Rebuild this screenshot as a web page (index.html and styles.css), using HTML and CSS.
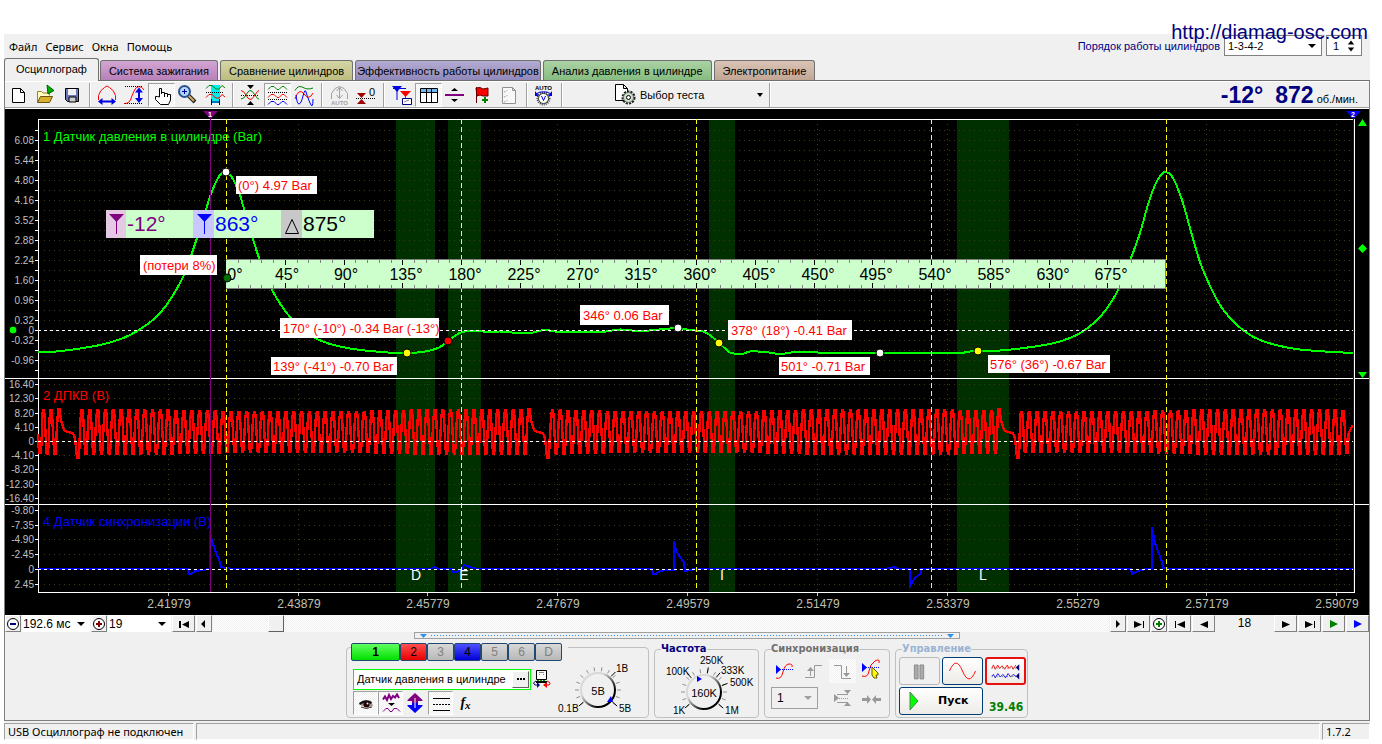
FILE: index.html
```html
<!DOCTYPE html>
<html lang="ru">
<head>
<meta charset="utf-8">
<title>USB Осциллограф</title>
<link rel="stylesheet" href="styles.css">
</head>
<body>
<main class="window">
  <a class="site-link" href="#">http://diamag-osc.com</a>

  <header class="top">
    <nav class="menu">
      <button type="button">Файл</button>
      <button type="button">Сервис</button>
      <button type="button">Окна</button>
      <button type="button">Помощь</button>
    </nav>
    <div class="order">
      <label for="order">Порядок работы цилиндров</label>
      <span class="combo combo-order"><select id="order"><option>1-3-4-2</option></select></span>
      <span class="spin"><input type="text" value="1" aria-label="Цилиндр">
        <svg width="10" height="16" viewBox="0 0 10 16"><path d="M1 6 5 1 9 6ZM1 10 5 15 9 10Z"/></svg></span>
    </div>
  </header>

  <div class="tabs" role="tablist">
    <button type="button" role="tab" class="tab tab-active" aria-selected="true">Осциллограф</button>
    <button type="button" role="tab" class="tab tab-ignition">Система зажигания</button>
    <button type="button" role="tab" class="tab tab-compare">Сравнение цилиндров</button>
    <button type="button" role="tab" class="tab tab-eff">Эффективность работы цилиндров</button>
    <button type="button" role="tab" class="tab tab-pressure">Анализ давления в цилиндре</button>
    <button type="button" role="tab" class="tab tab-power">Электропитание</button>
  </div>

  <section class="panel">
    <div class="toolbar">
      <button type="button" class="tool" aria-label="Новый"><svg viewBox="5 82 27 24"><path d="M12.500 87.500H20.500L24.500 91.500V101.500H12.500ZM20.500 87.500V91.500H24.500" fill="#fff" stroke="#000"/></svg></button>
      <button type="button" class="tool" aria-label="Открыть"><svg viewBox="32 82 27 24"><path d="M37.500 101V90.500H41.500L43 92H49.500V94.500" fill="#ffffc0" stroke="#a08020"/><path d="M37.500 101.500 40.500 95.500H52.500L49.500 101.500Z" fill="#d8b030" stroke="#705010"/><path d="M47 84 54 89.500 48 93Z" fill="#00b000" stroke="#006000"/></svg></button>
      <button type="button" class="tool" aria-label="Сохранить"><svg viewBox="59 82 27 24"><path d="M65.500 87.500H78.500V100.500H67.500L65.500 98.500Z" fill="#6878b8" stroke="#000"/><path d="M68 88H76V94H68Z" fill="#f0f0f0"/><path d="M69 96H76V101H69Z" fill="#ccc" stroke="#000"/></svg></button>
      <span class="sep"></span>
      <button type="button" class="tool" aria-label="Период"><svg viewBox="94 82 27 24" fill="none"><path d="M98.500 99V94.500Q100 89 104.500 86.500L107 85 109.500 86.500Q114 89 115.500 94.500V99" stroke="red"/><path d="M100 100.500H114" stroke="#0000e0" stroke-width="2"/><path d="M98 100.500 102.500 97V104ZM116 100.500 111.500 97V104Z" fill="#0000e0"/></svg></button>
      <button type="button" class="tool" aria-label="Амплитуда"><svg viewBox="121 82 27 24" fill="none"><path d="M124 102.500Q130 103 131.500 96L134 90Q136 85.500 139 85.500T144 89" stroke="red"/><path d="M125 85.500H143M125 102.500H143" stroke="#000" stroke-dasharray="1 1"/><path d="M139 90V98" stroke="#0000e0" stroke-width="2"/><path d="M139 86.500 143 91.500H135ZM139 102 143 97H135Z" fill="#0000e0"/></svg></button>
      <button type="button" class="tool pressed" aria-label="Рука"><svg viewBox="148 82 27 24"><path d="M159.500 96V87.500H161.500V93 91.500H164.500V93 92.500H167.500V94 93.500H170.500V99L168.500 103.500H160.500L155.500 98.500V95.500H157.500Z" fill="#fff" stroke="#000"/><path d="M164.500 92V96M167.500 93V96" stroke="#000"/></svg></button>
      <button type="button" class="tool" aria-label="Масштаб"><svg viewBox="175 82 27 24"><path d="M188 94 195 101" stroke="#222" stroke-width="4"/><path d="M188 94 194 100" stroke="#d0a860" stroke-width="2"/><circle cx="184.500" cy="90.500" r="5.500" fill="#b0d8f8" stroke="#305090" stroke-width="2"/><path d="M182 90.500H187M184.500 88V93" stroke="#0000a0"/></svg></button>
      <button type="button" class="tool" aria-label="Фрагмент"><svg viewBox="202 82 27 24" fill="none"><path d="M211 84H220V102H211Z" fill="#00f0f0"/><path d="M206 87.500 209 84.500H212L216 88H219L222 84.500 225 87" stroke="#008000"/><path d="M206 96.500 209 93.500H212L216 97H219L222 93.500 225 96" stroke="red"/><path d="M206 91.500H224" stroke="#000" stroke-dasharray="1 1"/><path d="M211.500 98V104M219.500 98V104M212 101H219" stroke="#000080"/></svg></button>
      <span class="sep"></span>
      <button type="button" class="tool" aria-label="Совместить"><svg viewBox="237 82 27 24" fill="none"><path d="M241 98Q244 98 246 94T250 89.500 255 94 259 98" stroke="#008000"/><path d="M241 89.500Q244 90 246 94T250 98.500 255 94 259 89.500" stroke="red"/><path d="M241 94.500H259" stroke="#000" stroke-dasharray="1 1"/><path d="M247 84H254L250.500 88ZM247 104H254L250.500 100Z" fill="#000"/></svg></button>
      <button type="button" class="tool pressed" aria-label="Разнести"><svg viewBox="264 82 27 24" fill="none"><path d="M268 88.500 271 85.500H274L277 88.500H279L282 85.500H284L287 88.500" stroke="#008000"/><path d="M268 96.500 271 93.500H274L277 96.500H279L282 93.500H284L287 96.500" stroke="red"/><path d="M268 103.500 271 100.500H274L277 103.500H279L282 100.500H284L287 103.500" stroke="#0000ff"/><path d="M268 91.500H287M268 98.500H287" stroke="#000" stroke-dasharray="1 1"/></svg></button>
      <button type="button" class="tool" aria-label="Наложить"><svg viewBox="291 82 27 24" fill="none"><path d="M295 89.500Q298 84 302 86T308 88 313 87" stroke="#008000"/><path d="M295 98Q299 86 304 93T313 92" stroke="red"/><path d="M296 94Q297 103 299 103T303 95 306 91 310 102 313 98" stroke="#0000ff"/></svg></button>
      <span class="sep"></span>
      <button type="button" class="tool" aria-label="Авто" disabled><svg viewBox="326 82 27 24" fill="none" stroke="#a0a0a0"><path d="M331.500 98V92.500L335 87.500 339.500 85.500 344 87.500 347.500 92.500V98M339.500 87V97M336.500 90 339.500 86.500 342.500 90M336.500 94 339.500 97.500 342.500 94"/><text x="331" y="104" class="tiny muted">AUTO</text></svg></button>
      <button type="button" class="tool" aria-label="Ноль"><svg viewBox="353 82 27 24"><path d="M357 92H366L361.500 97Z" fill="#a00000"/><path d="M357 103H366L361.500 98Z" fill="#a00000"/><path d="M356 97.500H375" stroke="#000" stroke-dasharray="1 1"/><text x="369" y="95" class="small">0</text></svg></button>
      <span class="sep"></span>
      <button type="button" class="tool" aria-label="Маркеры"><svg viewBox="388 82 27 24"><path d="M392 85H402L397 91Z" fill="#0000e0"/><path d="M397 88V99M393 87.500H406" stroke="#0000e0"/><path d="M400 90H411L405.500 96Z" fill="red"/><path d="M405.500 94V99" stroke="red"/><path d="M402.500 97.500H411.500V103.500H402.500Z" fill="#fff" stroke="#000080"/><path d="M404 101 409 99" stroke="#888"/></svg></button>
      <button type="button" class="tool pressed" aria-label="Таблица"><svg viewBox="415 82 27 24"><path d="M420.500 87.500H437.500V101.500H420.500Z" fill="#fff" stroke="#000"/><path d="M421 88H437V91H421Z" fill="#70b8f0"/><path d="M421 91.500H437M426.500 88V101M431.500 88V101" stroke="#000"/></svg></button>
      <button type="button" class="tool" aria-label="Делитель"><svg viewBox="442 82 27 24"><path d="M445 93H464V95H445Z" fill="#800080"/><path d="M451 90 454.500 87 458 90ZM451 98 454.500 101 458 98Z"/></svg></button>
      <button type="button" class="tool" aria-label="Флаг"><svg viewBox="469 82 27 24"><path d="M476 87 480 86.500 483 88 488 87V95H483L480 94 477 95Z" fill="red" stroke="#600000"/><path d="M476.500 86V102" stroke="#600000"/><path d="M482 99H488M485 96V102" stroke="#008000" stroke-width="2"/></svg></button>
      <button type="button" class="tool" aria-label="Список" disabled><svg viewBox="496 82 27 24" fill="none" stroke="#909090"><path d="M502.500 86.500H512.500L515.500 89.500V102.500H502.500ZM512.500 86.500V89.500H515.500" fill="#f8f8f8"/><path d="M504 90 505 91.500 508 88.500M504 95 505 96.500 508 93.500M504 100 505 101.500 508 98.500" stroke-dasharray="1 1"/></svg></button>
      <span class="sep"></span>
      <button type="button" class="tool" aria-label="Автонастройка"><svg viewBox="531 82 27 24"><text x="535" y="89" class="tiny">AUTO</text><circle cx="543.500" cy="97.500" r="6" fill="none" stroke="#444" stroke-width="2" stroke-dasharray="1 1"/><circle cx="543.500" cy="97.500" r="5" fill="#fff" stroke="#333"/><path d="M541.500 95 543.500 99.500 545.500 95" fill="none" stroke="#0000e0"/><path d="M536 93 540 91H547L551 93" fill="none" stroke="#0000e0"/><path d="M535 90V95H539ZM552 90V95H548Z" fill="#0000e0"/></svg></button>
      <span class="sep"></span>
      <button type="button" class="test-select">
        <svg width="22" height="22" viewBox="615 84 22 22"><path d="M616.500 84.500H624.500L628.500 88.500V100.500H616.500ZM624.500 84.500V88.500H628.500" fill="#fff" stroke="#000"/><circle cx="629.500" cy="97.500" r="5.500" fill="none" stroke="#222" stroke-width="3" stroke-dasharray="2 1"/><circle cx="629.500" cy="97.500" r="5" fill="#cfe0cf" stroke="#607060"/><circle cx="629.500" cy="97.500" r="2" fill="#fff" stroke="#000"/></svg>
        <span>Выбор теста</span>
        <svg class="test-arrow" width="6" height="4" viewBox="0 0 6 4"><path d="M0 0H6L3 4Z"/></svg>
      </button>
      <span class="sep"></span>
      <output class="readout"><b>-12°</b><b>872</b><span>об./мин.</span></output>
    </div>

    <svg id="scope" class="scope" viewBox="5 109 1364 506" role="img" aria-label="Осциллограмма"></svg>

    <div class="navbar">
      <button type="button" class="nav nav-s" aria-label="Уменьшить"><svg viewBox="0 0 16 16"><circle cx="8" cy="8" r="5.500" fill="#fff" stroke="#000"/><path d="M5 8H11" stroke="#000080" stroke-width="2"/></svg></button>
      <span class="combo combo-time"><select aria-label="Длительность"><option>192.6 мс</option></select></span>
      <button type="button" class="nav nav-s" aria-label="Увеличить"><svg viewBox="0 0 16 16"><circle cx="8" cy="8" r="5.500" fill="#fff" stroke="#000"/><path d="M5 8H11M8 5V11" stroke="#800000" stroke-width="2"/></svg></button>
      <span class="combo combo-frame"><select aria-label="Кадр"><option>19</option></select></span>
      <button type="button" class="nav" aria-label="В начало"><svg viewBox="0 0 16 16"><path d="M3 5H5V12H3ZM13 5V12L6 8.500Z"/></svg></button>
      <button type="button" class="nav nav-s" aria-label="Влево"><svg viewBox="0 0 16 16"><path d="M9 4V12L5 8Z"/></svg></button>
      <input class="scroll" type="range" min="0" max="1000" value="62" aria-label="Прокрутка">
      <button type="button" class="nav nav-s" aria-label="Вправо"><svg viewBox="0 0 16 16"><path d="M6 4V12L10 8Z"/></svg></button>
      <button type="button" class="nav" aria-label="В конец"><svg viewBox="0 0 16 16"><path d="M12 5H13V12H12ZM3 5V12L11 8.500Z"/></svg></button>
      <button type="button" class="nav nav-s" aria-label="Добавить"><svg viewBox="0 0 16 16"><circle cx="8" cy="8" r="5.500" fill="#fff" stroke="#000"/><path d="M5 8H11M8 5V11" stroke="#008000" stroke-width="2"/></svg></button>
      <button type="button" class="nav" aria-label="Первый"><svg viewBox="0 0 16 16"><path d="M3 5H4V12H3ZM13 5V12L5 8.500Z"/></svg></button>
      <button type="button" class="nav" aria-label="Назад"><svg viewBox="0 0 16 16"><path d="M12 5V12L4 8.500Z"/></svg></button>
      <span class="frame-no">18</span>
      <button type="button" class="nav" aria-label="Вперёд"><svg viewBox="0 0 16 16"><path d="M4 5V12L12 8.500Z"/></svg></button>
      <button type="button" class="nav" aria-label="Последний"><svg viewBox="0 0 16 16"><path d="M12 5H13V12H12ZM3 5V12L11 8.500Z"/></svg></button>
      <button type="button" class="nav play-green" aria-label="Воспроизвести"><svg viewBox="0 0 16 16"><path d="M4 4V12L12 8Z"/></svg></button>
      <button type="button" class="nav play-blue" aria-label="Воспроизвести быстро"><svg viewBox="0 0 16 16"><path d="M4 4V12L12 8Z"/></svg></button>
    </div>

    <div class="splitter">
      <svg width="7" height="4" viewBox="0 0 7 4"><path d="M0 0H7L3.500 4Z"/></svg><i></i><svg width="7" height="4" viewBox="0 0 7 4"><path d="M0 0H7L3.500 4Z"/></svg>
    </div>

    <div class="controls">
      <section class="group channel" aria-label="Канал">
        <div class="channel-row">
          <button type="button" class="ch ch-1">1</button><button type="button" class="ch ch-2">2</button><button type="button" class="ch">3</button><button type="button" class="ch ch-4">4</button><button type="button" class="ch">5</button><button type="button" class="ch">6</button><button type="button" class="ch">D</button>
        </div>
        <div class="channel-body">
          <div class="channel-left">
            <div class="sensor-row">
              <div class="sensor"><input type="text" value="Датчик давления в цилиндре" aria-label="Датчик"><button type="button" aria-label="Выбрать датчик"><svg width="10" height="2" viewBox="0 0 10 2"><path d="M1 0h2v2h-2zM4 0h2v2h-2zM7 0h2v2h-2z"/></svg></button></div>
              <button type="button" class="tool swap" aria-label="Переключить"><svg viewBox="533 667 22 24"><path d="M538.500 670.500H548.500V679.500H538.500Z" fill="#fff" stroke="#000"/><path d="M539 680.500H548" stroke="#00a000" stroke-dasharray="2 1"/><path d="M538 682H549" stroke="#000" stroke-width="2"/><path d="M541 672.500H546M541 674.500H542M545 674.500H546" stroke="#888"/><path d="M538 681Q534 683 537 685H540" fill="none" stroke="#000080"/><path d="M539 682V688L542 685Z" fill="#000080"/><path d="M549 681Q554 683 551 685H548" fill="none" stroke="red"/><path d="M549 682V688L545 685Z" fill="red"/></svg></button>
            </div>
            <div class="mode-row">
              <button type="button" class="tool pressed" aria-label="Показать"><svg viewBox="355 690 25 24"><path d="M361 703Q366 697 373 700L375 705Q367 708 361 703Z" fill="#99958f"/><path d="M361 702Q367 697 374 701L373 703Q367 700 362 704Z" fill="#111"/><circle cx="368.500" cy="703.500" r="3" fill="#200"/><circle cx="369.500" cy="702.500" r="1" fill="#eee"/><path d="M363 706Q368 709 374 706" fill="none" stroke="#333"/></svg></button>
              <button type="button" class="tool pressed" aria-label="Фильтр"><svg viewBox="380 690 25 24" fill="none" stroke="#800080"><path d="M385 698.500 387 695.500 389 699 391 694 393 698 395 695 397 696.500 399 693.500 401 697" stroke-width="2"/><path d="M385 710.500 388 707.500H390L392 710.500H394L396 707.500H399L402 710.500"/><path d="M390 702H397L393.500 705Z" fill="#000" stroke="none"/></svg></button>
              <button type="button" class="tool" aria-label="Смещение"><svg viewBox="405 690 25 24"><path d="M417 692 424.500 699V700H420V703H414V700H409.500V699Z" fill="#800080"/><path d="M417 712 424.500 705V704H420V702H414V704H409.500V705Z" fill="#0000ff"/><path d="M417 697V707" stroke="#fff"/></svg></button>
              <button type="button" class="tool pressed" aria-label="Уровни"><svg viewBox="430 690 25 24" stroke="#000"><path d="M435 697.500H452M435 709.500H452"/><path d="M435 703.500H452" stroke-dasharray="2 1"/></svg></button>
              <button type="button" class="tool" aria-label="Функция"><span class="fx">f<sub>x</sub></span></button>
            </div>
          </div>
          <svg class="knob" width="84" height="56" viewBox="560 663 84 56" data-cx="600" data-cy="692"></svg>
        </div>
      </section>

      <fieldset class="group freq">
        <legend>Частота</legend>
        <svg class="knob" width="92" height="64" viewBox="662 655 92 64" data-cx="704" data-cy="692"></svg>
      </fieldset>

      <fieldset class="group sync">
        <legend>Синхронизация</legend>
        <div class="sync-grid">
          <button type="button" class="tool" aria-label="Уровень"><svg viewBox="772 659 27 24" fill="none"><path d="M777 678Q782 680 784 672T790 664 793 667" stroke="red"/><path d="M777 669.500H794" stroke="#0000ff" stroke-dasharray="1 1"/><path d="M777 665V674L782 669.500Z" fill="#0000ff"/></svg></button>
          <button type="button" class="tool" aria-label="Фронт" disabled><svg viewBox="800 659 27 24" fill="none" stroke="#999"><path d="M805 677.500H814.500V665.500H822M810.500 676V669"/><path d="M807 671H814L810.500 667Z" fill="#999" stroke="none"/></svg></button>
          <button type="button" class="tool dotted" aria-label="Спад" disabled><svg viewBox="829 659 27 24" fill="none" stroke="#999"><path d="M834 665.500H841.500V678.500H851M846.500 666V674"/><path d="M843 673H850L846.500 677Z" fill="#999" stroke="none"/></svg></button>
          <button type="button" class="tool" aria-label="Автоуровень"><svg viewBox="857 659 27 24" fill="none"><path d="M861 676Q867 678 868 671T874 661 878 663" stroke="red"/><path d="M861 667.500H879" stroke="#0000ff" stroke-dasharray="1 1"/><path d="M861 663V672L866 667.500Z" fill="#0000ff"/><path d="M871 667 877 673V675H875L876 678H873L871 675Z" fill="#ff0" stroke="#665500"/></svg></button>
          <span class="combo combo-sync"><select aria-label="Канал синхронизации" disabled><option>1</option></select></span>
          <button type="button" class="tool" aria-label="Окно" disabled><svg viewBox="829 687 27 24" fill="none" stroke="#999"><path d="M837 694.500H848M837 702.500H848"/><path d="M837 698.500H848" stroke-dasharray="1 1"/><path d="M834 694V702L839 698ZM844 690H851L847.500 694ZM844 706H851L847.500 702Z" fill="#999" stroke="none"/></svg></button>
          <button type="button" class="tool" aria-label="Сжать" disabled><svg viewBox="857 687 27 24"><path d="M861 698H866V695L870 699.500 866 704V701H861ZM880 698H875V695L871 699.500 875 704V701H880Z" fill="#999"/></svg></button>
        </div>
      </fieldset>

      <fieldset class="group run">
        <legend>Управление</legend>
        <div class="run-grid">
          <button type="button" class="xp xp-off" aria-label="Пауза" disabled><svg viewBox="898 658 40 28"><path d="M912.500 665.500H916.500V680.500H912.500ZM918.500 665.500H922.500V680.500H918.500Z" fill="#aaa" stroke="#888"/></svg></button>
          <button type="button" class="xp" aria-label="Один кадр"><svg viewBox="941 658 40 28" fill="none"><path d="M947 672Q954 655 961 672T975 672" stroke="red"/></svg></button>
          <button type="button" class="xp xp-red" aria-label="Непрерывно"><svg viewBox="984 658 40 28" fill="none"><path d="M988 669 990 665 992 670 995 665 997 669 1000 666 1003 670 1006 665 1008 669 1011 666 1013 670 1016 665" stroke="red"/><path d="M988 678 990 676 992 680 995 675 998 679 1001 676 1004 680 1007 675 1010 679 1013 676 1016 678" stroke="#0000ff"/><path d="M988 678.500H1018M988 668.500H1018" stroke="#555" stroke-dasharray="1 2"/><path d="M1020 664V672L1016 668ZM1020 674V682L1016 678Z" fill="#000080"/></svg></button>
          <button type="button" class="xp start"><svg width="10" height="20" viewBox="0 0 10 20"><path d="M1 1 9 10 1 19Z" fill="#0f0" stroke="#558055"/></svg><span>Пуск</span></button>
          <output class="voltage">39.46</output>
        </div>
      </fieldset>
    </div>
  </section>

  <footer class="status"><span>USB Осциллограф не подключен</span><span></span><span>1.7.2</span></footer>
</main>
<script src="scope.js"></script>
</body>
</html>
```
FILE: styles.css
```css
* { box-sizing: border-box; }
body { margin: 0; background: #fff; color: #000; font: 11px/16px "Liberation Sans", Arial, sans-serif; }
button, input, select { font: inherit; color: inherit; margin: 0; padding: 0; border: 0; border-radius: 0; background: none; }
svg { display: block; }

.window { position: relative; margin: 34px 12px 5px 4px; background: #f0f0f0; }
.site-link { position: absolute; z-index: 2; right: 2px; top: -14px; font-size: 20px; line-height: 24px; color: #000080; text-decoration: none; }

/* menu row */
.top { display: flex; justify-content: space-between; height: 24px; }
.menu { display: flex; align-items: center; gap: 8px; padding: 2px 0 0 5px; font: 11px/16px "Noto Sans", sans-serif; }
.order { display: flex; align-items: flex-start; gap: 4px; padding: 1px 8px 0 0; color: #000080; }
.order label { line-height: 22px; }
.combo { position: relative; display: block; color: #000; background: #fff; }
.combo select { appearance: none; width: 100%; height: 100%; padding-left: 3px; opacity: 1; }
.combo::after { content: ""; position: absolute; right: 5px; top: 50%; margin-top: -2px; border: 4px solid transparent; border-top-color: #000; border-bottom: 0; pointer-events: none; }
.combo-order { width: 98px; height: 21px; border: 1px solid #808080; }
.spin { display: flex; align-items: center; justify-content: space-between; width: 36px; height: 21px; padding: 0 6px; border: 1px solid #808080; background: #fff; color: #000; }
.spin input { width: 14px; }

/* tabs */
.tabs { display: flex; align-items: flex-end; gap: 2px; }
.tab { height: 20px; padding: 0 8px; border: 1px solid #707070; border-bottom: 0; border-radius: 3px 3px 0 0; white-space: nowrap; }
.tab-active { height: 23px; margin: 0 -1px -1px 0; padding: 0 11px 2px; background: #f0f0f0; }
.tab-ignition { background: linear-gradient(#d2a6d2, #b880b8); }
.tab-compare { background: linear-gradient(#d6d6a6, #bcbc80); }
.tab-eff { padding: 0 1px; background: linear-gradient(#b4acd2, #9088b8); }
.tab-pressure { background: linear-gradient(#acd2a4, #86bc80); }
.tab-power { background: linear-gradient(#dac4b6, #c2a694); }

.panel { border: 1px solid #808080; border-top: 1px solid #707070; }

/* toolbar */
.toolbar { display: flex; align-items: center; height: 28px; border-top: 1px solid #fff; border-bottom: 1px solid #fff; box-shadow: inset 0 -1px #a0a0a0; }
.tool { display: grid; place-items: center; width: 27px; height: 24px; flex: none; }
.tool > svg { width: 100%; height: 100%; }
.pressed { border: 1px solid #a0a0a0; border-right-color: #fff; border-bottom-color: #fff; background: repeating-conic-gradient(#fff 0 25%, #f0f0f0 0 50%) 0 0 / 2px 2px; }
.tool.pressed > svg { margin: -1px; width: calc(100% + 2px); height: calc(100% + 2px); }
.dotted { background: repeating-conic-gradient(#fff 0 25%, #f0f0f0 0 50%) 0 0 / 2px 2px; }
.sep { flex: none; width: 2px; height: 24px; margin: 0 3px; border-left: 1px solid #a0a0a0; border-right: 1px solid #fff; }
.tiny { font-size: 6px; font-weight: bold; font-family: "Liberation Sans", Arial, sans-serif; stroke: none; }
.muted { fill: #a0a0a0; }
.small { font-size: 11px; }
.test-select { display: flex; align-items: center; gap: 4px; width: 200px; height: 24px; padding: 0 3px 0 48px; }
.test-arrow { margin-left: auto; }
.readout { display: flex; align-items: baseline; margin-left: auto; padding-right: 11px; color: #000080; }
.readout b { margin-right: 12px; font-size: 23px; line-height: 24px; }
.readout b + b { margin-right: 3px; }
.readout span { color: #000; }

/* scope screen */
.scope { width: 100%; height: auto; background: #000; font-family: "Liberation Sans", Arial, sans-serif; }
.scope .axis { font-size: 10px; fill: #c0c0c0; text-anchor: end; }
.scope .time { font-size: 12px; fill: #c0c0b4; text-anchor: middle; }
.scope .title { font-size: 13px; }
.scope .note { font-size: 13px; fill: #f00; }
.scope .degree { font-size: 16px; fill: #000; text-anchor: middle; }
.scope .reading { font-size: 21px; }
.scope .phase { font-size: 14px; fill: #fff; text-anchor: middle; }
.scope .flag { font-size: 7px; font-weight: bold; fill: #fff; text-anchor: middle; }

/* navigation row */
.navbar { display: flex; height: 17px; gap: 1px; }
.nav { display: grid; place-items: center; flex: none; width: 23px; border: 1px solid #fff; border-right-color: #808080; border-bottom-color: #808080; background: #f0f0f0; }
.nav svg { width: 16px; height: 16px; margin: -1px; }
.nav-s { width: 16px; }
.combo-time { width: 68px; }
.combo-frame { width: 63px; }
.navbar .combo { font-size: 12px; }
.navbar .combo select { padding-left: 1px; }
.scroll { flex: 1; min-width: 0; appearance: none; background: repeating-conic-gradient(#fff 0 25%, #f0f0f0 0 50%) 0 0 / 2px 2px; }
.scroll::-webkit-slider-thumb { appearance: none; width: 16px; height: 17px; border: 1px solid #fff; border-right-color: #606060; border-bottom-color: #606060; background: #f0f0f0; }
.frame-no { width: 57px; text-align: center; font-size: 12px; }
.play-green { fill: #008000; }
.play-blue { fill: #00f; }

.splitter { display: flex; align-items: center; gap: 4px; width: 40%; height: 7px; margin: 0 auto; padding: 0 5px; border: 1px solid #a0a0a0; fill: #3090f0; }
.splitter i { flex: 1; height: 1px; background: repeating-linear-gradient(90deg, #3090f0 0 1px, transparent 1px 3px); }

/* control groups */
.controls { display: flex; justify-content: center; align-items: flex-end; gap: 5px; padding: 4px 0 2px; }
.group { margin: 0; padding: 0; min-width: 0; border: 1px solid #c0c0c0; border-radius: 4px; }
fieldset.group { height: 75px; }
legend { margin-left: 6px; padding: 0; font: bold 11px/12px "DejaVu Sans Condensed", "DejaVu Sans", sans-serif; color: #707070; }
.channel { width: 303px; height: 71px; }
.channel-row { display: flex; width: 217px; margin: -5px 0 0 4px; background: #f0f0f0; }
.ch { width: 27px; height: 18px; border: 1px solid #204870; border-radius: 2px; background: linear-gradient(#d8d8d8, #b8b8b8); color: #808080; font-size: 12px; }
.ch-1 { width: 49px; background: linear-gradient(#60ff60, #00e000); color: #000; font-weight: bold; }
.ch-2 { background: linear-gradient(#ff5050, #e80000); color: #000; }
.ch-4 { background: linear-gradient(#5050ff, #0000d8); color: #000; }
.channel-body { display: flex; gap: 6px; padding-left: 6px; }
.sensor-row { display: flex; align-items: center; height: 24px; margin-top: 6px; }
.channel-left { display: flex; flex-direction: column; flex: none; }
.sensor { display: flex; width: 178px; height: 21px; border: 1px solid #0f0; background: #fff; }
.sensor input { flex: 1; min-width: 0; padding-left: 3px; }
.sensor button { display: grid; place-items: center; width: 17px; margin: 1px; border: 1px solid #fff; border-right-color: #606060; border-bottom-color: #606060; background: #f0f0f0; }
.swap { width: 22px; }
.mode-row { display: flex; }
.mode-row .tool { width: 25px; height: 24px; }
.fx { font: italic bold 14px/16px "Liberation Serif", serif; }
.fx sub { font-size: 11px; vertical-align: -2px; line-height: 8px; }
.channel .knob { margin-left: -1px; }
.knob text { font-size: 10px; }
.knob .value { font-size: 11px; text-anchor: middle; }

.freq { width: 105px; }
.freq legend { color: #000080; }
.freq .knob { margin-left: 7px; }
.sync { width: 126px; }
.sync-grid { display: grid; grid-template-columns: repeat(4, 28px); gap: 4px 1px; padding: 4px 4px 0 6px; }
.combo-sync { grid-column: span 2; width: 47px; height: 22px; border: 1px solid #a0a0a0; background: #f0f0f0; }
.combo-sync::after { border-top-color: #a0a0a0; }
.combo-sync select { padding-left: 5px; opacity: 1; color: #000; font-size: 12px; }
.run { width: 133px; }
.run legend { color: #9ab4d2; }
.run-grid { display: grid; grid-template-columns: repeat(3, 41px); gap: 2px; padding: 2px 0 0 3px; }
.xp { height: 28px; border: 1px solid #003c74; border-radius: 3px; background: linear-gradient(#fff, #ecebe6); }
.xp > svg { width: 100%; height: 100%; }
.xp-off { border-color: #b8b8b8; background: #f0f0f0; }
.xp-red { border: 2px solid #e81010; }
.start { grid-column: span 2; display: flex; align-items: center; gap: 19px; padding-left: 9px; font: bold 11px/16px "DejaVu Sans", sans-serif; }
.start > svg { width: 10px; height: 20px; }
.voltage { align-self: end; padding-left: 4px; font: bold 12px/16px "DejaVu Sans Condensed", "DejaVu Sans", sans-serif; color: #008000; }

/* status bar */
.status { display: flex; gap: 2px; padding-top: 2px; font: 11px/15px "Noto Sans", sans-serif; }
.status span { height: 17px; padding-left: 3px; border: 1px solid #a0a0a0; border-right-color: #fff; border-bottom-color: #fff; }
.status span:first-child { width: 190px; }
.status span:nth-child(2) { flex: 1; }
.status span:last-child { width: 48px; }
```
FILE: scope.js
```js
const NS = 'http://www.w3.org/2000/svg';
function add(parent, name, attrs, text) {
  const el = document.createElementNS(NS, name);
  for (const key in attrs) el.setAttribute(key, attrs[key]);
  if (text !== undefined) el.textContent = text;
  parent.appendChild(el);
  return el;
}
const scope = document.getElementById('scope');
const rect = (x, y, width, height, fill, more) => add(scope, 'rect', { x, y, width, height, fill, ...more });
const path = (d, stroke, more) => add(scope, 'path', { d, stroke, fill: 'none', ...more });
const text = (x, y, cls, value, fill) => add(scope, 'text', fill ? { x, y, class: cls, fill } : { x, y, class: cls }, value);
const LEFT = 38, RIGHT = 1353, TOP = 119, BOTTOM = 592;

// phase windows
[[396, 39], [448, 33], [709, 26], [957, 52]].forEach(([x, w]) => rect(x, 120, w, 472, '#003000'));

// grid and axis labels
const axes = [];
for (let y = 130; y <= 370; y += 10) axes.push([y, '']);
const bar = { 140: '6.08', 160: '5.44', 180: '4.80', 200: '4.16', 220: '3.52', 240: '2.88', 260: '2.24', 280: '1.60', 300: '0.96', 320: '0.32', 330: '0', 340: '-0.32', 360: '-0.96' };
axes.forEach(a => { a[1] = bar[a[0]] || ''; });
axes.push([384, '16.40'], [398, '12.30'], [413, '8.20'], [427, '4.10'], [441, '0'], [455, '-4.10'], [469, '-8.20'], [484, '-12.30'], [498, '-16.40'],
  [510, '-9.80'], [525, '-7.35'], [539, '-4.90'], [554, '-2.45'], [569, '0'], [584, '2.45']);
axes.forEach(([y, label]) => {
  path(`M${LEFT + 6} ${y + 0.5}H${RIGHT}`, '#3c3c10', { 'stroke-dasharray': '1 4' });
  rect(35, y, 3, 1, '#fff');
  if (label) text(34, y + 4, 'axis', label);
});
const times = [[168, '2.41979'], [298, '2.43879'], [427, '2.45779'], [557, '2.47679'], [687, '2.49579'], [817, '2.51479'], [947, '2.53379'], [1077, '2.55279'], [1206, '2.57179'], [1336, '2.59079']];
times.forEach(([x, label]) => {
  path(`M${x + 0.5} 124V${BOTTOM}`, '#3c3c10', { 'stroke-dasharray': '1 4' });
  rect(x, 593, 1, 3, '#c0c0c0');
  text(x + 1, 608, 'time', label);
});

// frame
rect(LEFT, TOP, RIGHT - LEFT + 2, 1, '#fff');
rect(LEFT, TOP, 1, BOTTOM - TOP + 1, '#fff');
rect(LEFT, BOTTOM, RIGHT - LEFT + 2, 1, '#fff');
rect(RIGHT + 1, TOP, 1, BOTTOM - TOP + 1, '#fff');
rect(5, 378, 1364, 1, '#fff');
rect(5, 504, 1364, 1, '#fff');

text(43, 141, 'title', '1 Датчик давления в цилиндре (Bar)', '#0f0');
text(43, 400, 'title', '2 ДПКВ (В)', '#f00');
text(43, 526, 'title', '4 Датчик синхронизации (В)', '#00f');

// cylinder pressure
const pressure = [[38, 352], [50, 352], [65, 350.5], [80, 348.5], [100, 345], [115, 341], [130, 335], [145, 326], [155, 318], [165, 307], [175, 292], [184, 275], [191, 256], [197, 238], [203, 221], [207, 206], [212, 191], [217, 180], [221, 174], [226, 172], [231, 176], [235, 183], [240, 195], [244, 209], [252, 236], [259, 258], [265, 275], [272, 290], [281, 305], [290, 317], [302, 329], [315, 338], [330, 344], [350, 348.5], [370, 351], [396, 353], [410, 353], [422, 352], [432, 350], [440, 347], [448, 341], [456, 335], [462, 332], [470, 331], [480, 331], [488, 332.5], [500, 331.5], [518, 333], [530, 333], [545, 330], [560, 332], [600, 332], [620, 329.5], [640, 331], [665, 329], [678, 328], [690, 330], [703, 331.5], [710, 335], [719, 343], [727, 350], [731, 353], [742, 354], [750, 351.5], [765, 352], [780, 354], [795, 352], [810, 352], [830, 353], [880, 353], [957, 353], [965, 352], [978, 351], [1000, 350.5], [1020, 348.5], [1050, 344], [1070, 338], [1085, 330], [1100, 317], [1110, 304], [1119, 288], [1131, 258], [1140, 233], [1147, 208], [1153, 190], [1158, 179], [1163, 173], [1166, 172], [1171, 175], [1176, 184], [1183, 203], [1190, 228], [1200, 262], [1211, 288], [1222, 308], [1235, 323], [1247, 333], [1260, 340], [1280, 346], [1300, 349.5], [1325, 351.5], [1353, 353]];
let curve = `M${pressure[0]}`;
for (let i = 0; i < pressure.length - 1; i++) {
  const p0 = pressure[Math.max(0, i - 1)], p1 = pressure[i], p2 = pressure[i + 1], p3 = pressure[Math.min(pressure.length - 1, i + 2)];
  curve += `C${p1[0] + (p2[0] - p0[0]) / 6} ${p1[1] + (p2[1] - p0[1]) / 6} ${p2[0] - (p3[0] - p1[0]) / 6} ${p2[1] - (p3[1] - p1[1]) / 6} ${p2}`;
}
path(curve, '#0f0', { 'stroke-width': 2, 'shape-rendering': 'crispEdges' });

// crankshaft sensor: 58 teeth, then a gap of two
const teeth = [];
function tooth(x) {
  const lift = Math.round(1.5 * Math.sin(x / 62));
  teeth.push([x - 1.6, 420], [x - 0.6, 411 - lift], [x + 0.6, 411 - lift], [x + 1.4, 420], [x + 2, 433], [x + 2.6, 443], [x + 3.2, 453 + lift], [x + 4.4, 453 + lift], [x + 5.2, 443], [x + 5.6, 433]);
}
function gap(x) {
  teeth.push([x - 1.6, 420], [x - 0.6, 409], [x + 0.6, 409], [x + 2, 420], [x + 5, 430], [x + 8, 432], [x + 14, 433], [x + 16, 438], [x + 18, 458], [x + 20, 458], [x + 20.6, 441]);
}
const SPAN = 447, STEP = SPAN / 57;
tooth(43.5);
tooth(51);
gap(59);
for (let i = 0; i < 57; i++) tooth(82 + i * STEP);
gap(529);
for (let i = 0; i < 57; i++) tooth(552.5 + i * STEP);
gap(999);
for (let i = 0; i < 42; i++) tooth(1021.5 + i * STEP);
path('M38 434L39 453L41 453L42 430L' + teeth.map(p => p.join(' ')).join('L') + 'L1353 425', '#f00', { 'stroke-width': 2.4, 'shape-rendering': 'crispEdges' });

// synchronisation sensor
path('M38 569H188L189 574H191L195 571L202 570L210 569V531L212 541L216 553L220 562L221 567L232 569H430L435 567L438 569H452L453 572L461 571L464 565L470 567L477 569H652L653 574H656L660 571L666 570H674V541L676 550L679 556L684 562L685 571L695 569H885L894 567L897 569H910V586L914 579L921 573V569H1131L1132 574L1138 571L1146 569H1152V527L1155 543L1162 562L1163 568L1173 569H1353', '#00f', { 'stroke-width': 2, 'shape-rendering': 'crispEdges' });

[330, 441, 569].forEach(y => path(`M${LEFT} ${y + 0.5}H${RIGHT}`, '#fff', { 'stroke-dasharray': '3 3' }));
[226, 461, 696, 931, 1166].forEach(x => path(`M${x + 0.5} ${TOP}V590`, '#ff0', { 'stroke-dasharray': '5 3' }));
rect(210, 115, 1, 477, '#800080');
rect(RIGHT, 115, 1, 477, '#00f');
[['D', 416], ['E', 464], ['I', 722], ['L', 983]].forEach(([s, x]) => text(x, 580, 'phase', s));

// cursor flags and edge handles
path('M203 111H218L210.500 119Z', 'none', { fill: '#800080' });
text(210, 117, 'flag', '1');
path('M1346 111H1361L1353.500 119Z', 'none', { fill: '#00f' });
text(1353, 117, 'flag', '2');
path('M1358 126 1362.500 119 1367 126ZM1358 248.500 1362.500 244 1367 248.500 1362.500 253ZM1358 372 1362.500 378 1367 372Z', 'none', { fill: '#0f0' });

// degree ruler
rect(226, 259, 940, 30, '#808080');
rect(226, 260, 939, 28, '#ccffcc');
for (let i = 1; i < 80; i++) {
  const x = Math.round(226 + i * 11.75), major = i % 5 === 0;
  const fill = major ? '#000' : '#808080', h = major ? 5 : 3;
  rect(x, 260, 1, h, fill);
  rect(x, 288 - h, 1, h, fill);
}
for (let i = 0; i < 16; i++) text(Math.round(226 + i * 58.75) + (i === 0 ? 9 : i < 3 ? 2 : 4), 280, 'degree', i * 45 + '°');

// cursor readings
rect(106, 210, 268, 28, '#ccffcc');
rect(106, 210, 20, 28, '#e4c8e4');
rect(193, 210, 21, 28, '#c8c8ff');
rect(281, 210, 21, 28, '#c8c8c8');
path('M109 214H124L116.500 222Z', 'none', { fill: '#800080' });
rect(116, 218, 1, 16, '#800080');
path('M197 214H212L204.500 222Z', 'none', { fill: '#00f' });
rect(204, 218, 1, 16, '#00f');
path('M285.500 233.500H298.500L292 219.500Z', '#000');
text(127, 231, 'reading', '-12°', '#800080');
text(215, 231, 'reading', '863°', '#00f');
text(303, 231, 'reading', '875°', '#000');

// measured points
[[226, 172, '#fff'], [407, 353, '#ff0'], [448, 341, '#f00'], [678, 328, '#fff'], [719, 343, '#ff0'], [880, 353, '#fff'], [978, 351, '#ff0'], [227, 278, '#007000'], [13, 330, '#0f0']]
  .forEach(([cx, cy, fill]) => add(scope, 'circle', { cx, cy, r: 4, fill, stroke: '#000' }));
[[236, 176, 81, 18, '(0°) 4.97 Bar'], [140, 255, 77, 20, '(потери 8%)'], [280, 318, 159, 20, '170° (-10°) -0.34 Bar (-13°)'], [271, 357, 126, 18, '139° (-41°) -0.70 Bar'],
  [580, 305, 89, 20, '346° 0.06 Bar'], [728, 320, 124, 20, '378° (18°) -0.41 Bar'], [779, 357, 91, 18, '501° -0.71 Bar'], [988, 355, 122, 18, '576° (36°) -0.67 Bar']]
  .forEach(([x, y, w, h, s]) => {
    rect(x, y, w, h, '#fff');
    text(x + (h === 20 ? 3 : 2), y + (h === 20 ? 15 : 14), 'note', s);
  });

// rotary knobs
const dials = [
  { value: '5B', pointer: 'M613 698 609 704 615 704Z', labels: [['1B', 618, 674], ['0.1B', 560, 714], ['5B', 621, 714]], dark: [-46, 40, 140] },
  { value: '160K', pointer: 'M697 676V682L702 679Z', labels: [['250K', 700, 664], ['100K', 666, 675], ['333K', 721, 674], ['500K', 730, 686], ['1K', 673, 714], ['1M', 725, 714]], dark: [-132, -80, -50, -20, 40, 140] },
];
document.querySelectorAll('.knob').forEach((svg, n) => {
  const cx = +svg.dataset.cx, cy = +svg.dataset.cy, dial = dials[n];
  const at = (deg, r) => [cx + r * Math.cos(deg * Math.PI / 180), cy + r * Math.sin(deg * Math.PI / 180)].map(v => v.toFixed(1)).join(' ');
  const defs = add(svg, 'defs', {});
  const grad = add(defs, 'linearGradient', { id: 'rim' + n, x1: 0.1, y1: 0.1, x2: 0.9, y2: 0.9 });
  add(grad, 'stop', { offset: '0.3', 'stop-color': '#d8d8d8' });
  add(grad, 'stop', { offset: '0.8', 'stop-color': '#000' });
  for (let a = -220; a <= 40; a += 20) add(svg, 'path', { d: `M${at(a, 19)}L${at(a, 23)}`, stroke: '#909090' });
  dial.dark.forEach(a => add(svg, 'path', { d: `M${at(a, 19)}L${at(a, 25)}`, stroke: '#000' }));
  add(svg, 'circle', { cx, cy, r: 17, fill: '#f0f0f0', stroke: `url(#rim${n})`, 'stroke-width': 2 });
  add(svg, 'path', { d: dial.pointer, fill: '#00f' });
  add(svg, 'text', { x: cx, y: cy + 5, class: 'value' }, dial.value);
  dial.labels.forEach(([s, x, y]) => add(svg, 'text', { x, y }, s));
});
```
